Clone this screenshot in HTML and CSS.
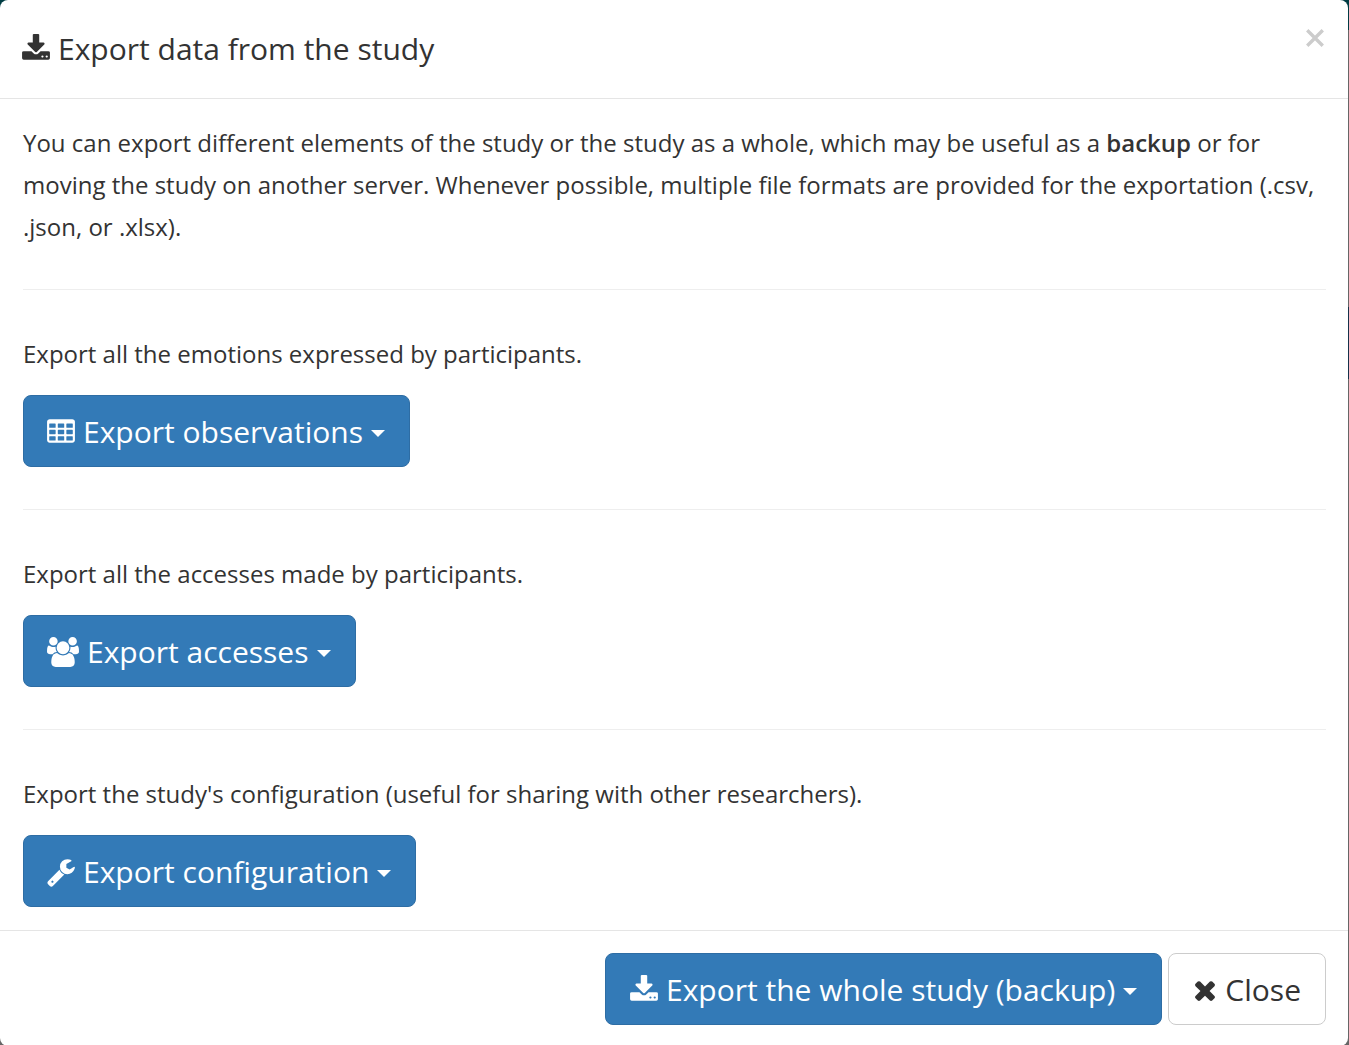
FILE: index.html
```html
<!DOCTYPE html>
<html lang="en">
<head>
<meta charset="utf-8">
<meta name="viewport" content="width=device-width, initial-scale=1">
<title>Export data from the study</title>
<link rel="stylesheet" href="styles.css">
</head>
<body>
<svg class="sprite" aria-hidden="true">
  <symbol id="download" viewBox="64 0 1664 1792"><path d="M1344 1344q0-26-19-45t-45-19-45 19-19 45 19 45 45 19 45-19 19-45zm256 0q0-26-19-45t-45-19-45 19-19 45 19 45 45 19 45-19 19-45zm128-224v320q0 40-28 68t-68 28h-1472q-40 0-68-28t-28-68v-320q0-40 28-68t68-28h465l135 136q58 56 136 56t136-56l136-136h464q40 0 68 28t28 68zm-325-569q17 41-14 70l-448 448q-18 19-45 19t-45-19l-448-448q-31-29-14-70 17-39 59-39h256v-448q0-26 19-45t45-19h256q26 0 45 19t19 45v448h256q42 0 59 39z"/></symbol>
  <symbol id="table" viewBox="64 0 1664 1792"><path fill-rule="evenodd" d="M224 128h1344q66 0 113 47t47 113v1088q0 66-47 113t-113 47h-1344q-66 0-113-47t-47-113v-1088q0-66 47-113t113-47zM224 384q-32 0-32 32v192q0 32 32 32h320q32 0 32-32v-192q0-32-32-32zm512 0q-32 0-32 32v192q0 32 32 32h320q32 0 32-32v-192q0-32-32-32zm512 0q-32 0-32 32v192q0 32 32 32h320q32 0 32-32v-192q0-32-32-32zM224 768q-32 0-32 32v192q0 32 32 32h320q32 0 32-32v-192q0-32-32-32zm512 0q-32 0-32 32v192q0 32 32 32h320q32 0 32-32v-192q0-32-32-32zm512 0q-32 0-32 32v192q0 32 32 32h320q32 0 32-32v-192q0-32-32-32zM224 1152q-32 0-32 32v192q0 32 32 32h320q32 0 32-32v-192q0-32-32-32zm512 0q-32 0-32 32v192q0 32 32 32h320q32 0 32-32v-192q0-32-32-32zm512 0q-32 0-32 32v192q0 32 32 32h320q32 0 32-32v-192q0-32-32-32z"/></symbol>
  <symbol id="users" viewBox="0 0 1920 1792"><path d="M593 896q-162 5-265 128h-134q-82 0-138-40.500t-56-118.500q0-353 124-353 6 0 43.500 21t97.500 42.500 119 21.500q67 0 133-23-5 37-5 66 0 139 81 256zm1071 637q0 120-73 189.500t-194 69.500h-874q-121 0-194-69.500t-73-189.500q0-53 3.500-103.500t14-109 26.500-108.500 43-97.500 62-81 85.500-53.500 111.500-20q10 0 43 21.500t73 48 107 48 135 21.500 135-21.500 107-48 73-48 43-21.500q61 0 111.500 20t85.500 53.500 62 81 43 97.500 26.500 108.500 14 109 3.500 103.500zm-1024-1277q0 106-75 181t-181 75-181-75-75-181 75-181 181-75 181 75 75 181zm704 384q0 159-112.500 271.500t-271.500 112.500-271.500-112.500-112.500-271.500 112.500-271.500 271.500-112.500 271.500 112.500 112.500 271.500zm576 225q0 78-56 118.500t-138 40.500h-134q-103-123-265-128 81-117 81-256 0-29-5-66 66 23 133 23 59 0 119-21.500t97.500-42.500 43.500-21q124 0 124 353zm-128-609q0 106-75 181t-181 75-181-75-75-181 75-181 181-75 181 75 75 181z"/></symbol>
  <symbol id="wrench" viewBox="64 0 1664 1792"><path d="M448 1472q0-26-19-45t-45-19-45 19-19 45 19 45 45 19 45-19 19-45zm644-420l-682 682q-37 37-90 37-52 0-91-37l-106-108q-38-36-38-90 0-53 38-91l681-681q39 98 114.500 173.500t173.500 114.500zm634-435q0 39-23 106-47 134-164.500 217.500t-258.500 83.500q-185 0-316.500-131.500t-131.500-316.500 131.500-316.500 316.500-131.500q58 0 121.500 16.500t107.500 46.500q16 11 16 28t-16 28l-293 169v224l193 107q5-3 79-48.500t135.500-81 70.500-35.500q15 0 23.500 10t8.500 25z"/></symbol>
  <symbol id="times" viewBox="192 0 1408 1792"><path d="M1490 1322q0 40-28 68l-136 136q-28 28-68 28t-68-28l-294-294-294 294q-28 28-68 28t-68-28l-136-136q-28-28-28-68t28-68l294-294-294-294q-28-28-28-68t28-68l136-136q28-28 68-28t68 28l294 294 294-294q28-28 68-28t68 28l136 136q28 28 28 68t-28 68l-294 294 294 294q28 28 28 68z"/></symbol>
</svg>
<div class="modal" role="dialog" aria-labelledby="modal-title">
  <header class="modal-header">
    <h1 class="modal-title" id="modal-title"><svg class="icon" aria-hidden="true"><use href="#download"/></svg>Export data from the study</h1>
    <button class="dismiss" type="button" aria-label="Close dialog"><svg class="dismiss-icon" viewBox="0 0 18 18" aria-hidden="true"><path d="M2 2l14 14M16 2L2 16"/></svg></button>
  </header>
  <main class="modal-body">
    <p class="text">You can export different elements of the study or the study as a whole, which may be useful as a <strong>backup</strong> or for moving the study on another server. Whenever possible, multiple file formats are provided for the exportation (.csv, .json, or .xlsx).</p>
    <section class="export">
      <p class="text">Export all the emotions expressed by participants.</p>
      <button class="btn btn-primary" type="button" aria-haspopup="true"><svg class="icon" aria-hidden="true"><use href="#table"/></svg>Export observations<span class="caret"></span></button>
    </section>
    <section class="export">
      <p class="text">Export all the accesses made by participants.</p>
      <button class="btn btn-primary" type="button" aria-haspopup="true"><svg class="icon icon-wide" aria-hidden="true"><use href="#users"/></svg>Export accesses<span class="caret"></span></button>
    </section>
    <section class="export">
      <p class="text">Export the study's configuration (useful for sharing with other researchers).</p>
      <button class="btn btn-primary" type="button" aria-haspopup="true"><svg class="icon" aria-hidden="true"><use href="#wrench"/></svg>Export configuration<span class="caret"></span></button>
    </section>
  </main>
  <footer class="modal-footer">
    <button class="btn btn-primary" type="button" aria-haspopup="true"><svg class="icon" aria-hidden="true"><use href="#download"/></svg>Export the whole study (backup)<span class="caret"></span></button>
    <button class="btn btn-default" type="button"><svg class="icon icon-narrow" aria-hidden="true"><use href="#times"/></svg>Close</button>
  </footer>
</div>
</body>
</html>
```
FILE: styles.css
```css
* {
  box-sizing: border-box;
}

body {
  margin: 0;
  padding-right: 1px;
  background: linear-gradient(#003c43 30px, #666 30px 307px, #15324a 307px 379px, #666 379px);
  color: #333;
  font: 24px/42px "Open Sans", "Noto Sans", sans-serif;
}

strong {
  font-weight: 600;
}

.sprite {
  display: none;
}

.modal {
  background: #fff;
  border-radius: 8px;
}

.modal-header {
  display: flex;
  align-items: flex-start;
  justify-content: space-between;
  padding: 28px 23px 28px 22px;
  border-bottom: 1px solid #e5e5e5;
}

.modal-title {
  display: flex;
  align-items: center;
  margin: 0;
  font-size: 30px;
  font-weight: 400;
  line-height: 42px;
}

.icon {
  flex: none;
  width: 28px;
  height: 30px;
  margin-right: 8px;
  fill: currentColor;
}

.icon-wide {
  width: 32px;
}

.icon-narrow {
  width: 24px;
}

.dismiss {
  display: flex;
  padding: 0;
  border: 0;
  background: none;
  color: #ccc;
}

.dismiss-icon {
  width: 20px;
  height: 20px;
  fill: none;
  stroke: currentColor;
  stroke-width: 3;
}

.modal-body {
  padding: 23px 22px 22px 23px;
}

.text {
  margin: 0;
}

.export {
  margin-top: 41px;
  padding: 43px 0 1px;
  border-top: 1px solid #eee;
}

.export .btn {
  margin-top: 20px;
}

.btn {
  display: flex;
  align-items: center;
  padding: 16px 24px 14px;
  border: 1px solid;
  border-radius: 8px;
  font: inherit;
  font-size: 30px;
  line-height: 40px;
  white-space: nowrap;
}

.export .btn {
  padding-left: 23px;
}

.btn-primary {
  border-color: #2e6da4;
  background: #337ab7;
  color: #fff;
}

.btn-default {
  border-color: #ccc;
  background: #fff;
  color: #333;
}

.caret {
  margin-top: 2px;
  margin-left: 8px;
  border-top: 7px solid;
  border-right: 7px solid transparent;
  border-left: 7px solid transparent;
}

.modal-footer {
  display: flex;
  flex-wrap: wrap;
  justify-content: flex-end;
  gap: 6px;
  padding: 22px 22px 21px;
  border-top: 1px solid #e5e5e5;
}
```
